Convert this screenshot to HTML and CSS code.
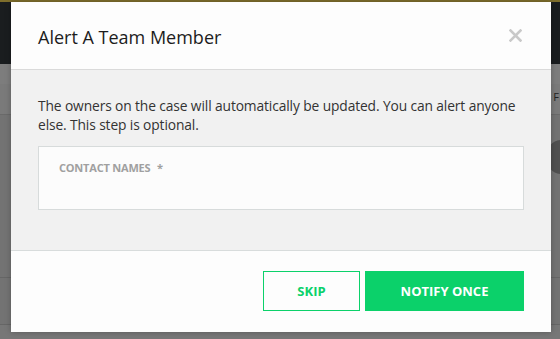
FILE: index.html
```html
<!DOCTYPE html>
<html lang="en">
<head>
    <meta charset="UTF-8">
    <title>Alert A Team Member</title>
    <link rel="stylesheet" href="styles.css">
</head>
<body>
    <div class="page">
        <div class="top-stripe"></div>
        <div class="top-header"></div>
        <div class="toolbar"><span class="toolbar-f">F</span></div>
        <div class="row row-main"><span class="avatar"></span></div>
        <div class="row row-next"></div>
        <div class="row row-last"></div>
    </div>

    <div class="modal">
        <div class="modal-header">
            <h2>Alert A Team Member</h2>
            <button class="close-btn" aria-label="Close">
                <svg width="13" height="13" viewBox="0 0 13 13">
                    <path d="M1.5 1.5 L11.5 11.5 M11.5 1.5 L1.5 11.5" stroke="#c9c9c9" stroke-width="2.6" stroke-linecap="square"/>
                </svg>
            </button>
        </div>
        <div class="modal-body">
            <p>The owners on the case will automatically be updated. You can alert anyone else. This step is optional.</p>
            <div class="field-box">
                <label>Contact Names <span class="req">*</span></label>
            </div>
        </div>
        <div class="modal-footer">
            <button class="btn btn-outline">Skip</button>
            <button class="btn btn-primary">Notify Once</button>
        </div>
    </div>
</body>
</html>
```

FILE: styles.css
```css
* {
    margin: 0;
    padding: 0;
    box-sizing: border-box;
    font-family: 'Open Sans', sans-serif;
}

body {
    width: 560px;
    height: 339px;
    overflow: hidden;
    background-color: #737373;
}

.page {
    display: flex;
    flex-direction: column;
    height: 339px;
}

.top-stripe {
    height: 2px;
    background-color: #7e6e2c;
}

.top-header {
    height: 62px;
    background-color: #1a1d1f;
}

.toolbar {
    height: 51px;
    background-color: #7a7a7a;
    border-top: 20px solid #7d7d7d;
    border-bottom: 1px solid #6a6a6a;
    text-align: right;
}

.toolbar-f {
    display: inline-block;
    font-size: 11px;
    color: #222;
    margin-top: -1px;
    padding-right: 1px;
}

.row {
    border-bottom: 1px solid #666;
    position: relative;
}

.row-main {
    height: 163px;
    background-color: #737373;
}

.avatar {
    position: absolute;
    right: -16px;
    top: 25px;
    width: 30px;
    height: 34px;
    border-radius: 50%;
    background-color: #505050;
}

.row-next {
    height: 47px;
    background-color: #737373;
}

.row-last {
    flex: 1;
    border-bottom: none;
    background-color: #777;
}

.modal {
    position: absolute;
    left: 11px;
    top: 2px;
    width: 540px;
    height: 330px;
    background: #fdfdfd;
    display: flex;
    flex-direction: column;
    box-shadow: 0 0 6px rgba(0, 0, 0, 0.25);
}

.modal-header {
    height: 68px;
    padding: 0 27px;
    display: flex;
    align-items: center;
    justify-content: space-between;
    border-bottom: 1px solid #dadada;
}

.modal-header h2 {
    font-size: 18px;
    font-weight: 400;
    color: #1c1c1c;
    margin-top: 2px;
}

.close-btn {
    background: none;
    border: none;
    width: 13px;
    height: 13px;
    margin-right: 2px;
    display: flex;
}

.modal-body {
    flex: 1;
    background-color: #f1f1f1;
    padding: 26px 27px 0;
    border-bottom: 1px solid #d8dcdc;
}

.modal-body p {
    font-size: 13.8px;
    letter-spacing: -0.12px;
    line-height: 19px;
    color: #333;
    margin-right: -8px;
    margin-bottom: 12px;
}

.field-box {
    height: 64px;
    background: #fcfcfc;
    border: 1px solid #d7dbdb;
    padding: 13px 20px;
}

.field-box label {
    display: block;
    font-size: 11px;
    font-weight: 700;
    letter-spacing: -0.2px;
    text-transform: uppercase;
    color: #a0a0a0;
}

.req {
    margin-left: 4px;
}

.modal-footer {
    height: 81px;
    padding: 20px 27px 0;
    display: flex;
    justify-content: flex-end;
    align-items: flex-start;
    gap: 5px;
}

.btn {
    height: 40px;
    font-size: 13px;
    font-weight: 700;
    text-transform: uppercase;
    cursor: pointer;
}

.btn-outline {
    width: 97px;
    background: #fdfdfd;
    color: #0bd16a;
    border: 1px solid #0bd16a;
}

.btn-primary {
    width: 159px;
    background: #0bd16a;
    color: #fff;
    border: none;
}
```
